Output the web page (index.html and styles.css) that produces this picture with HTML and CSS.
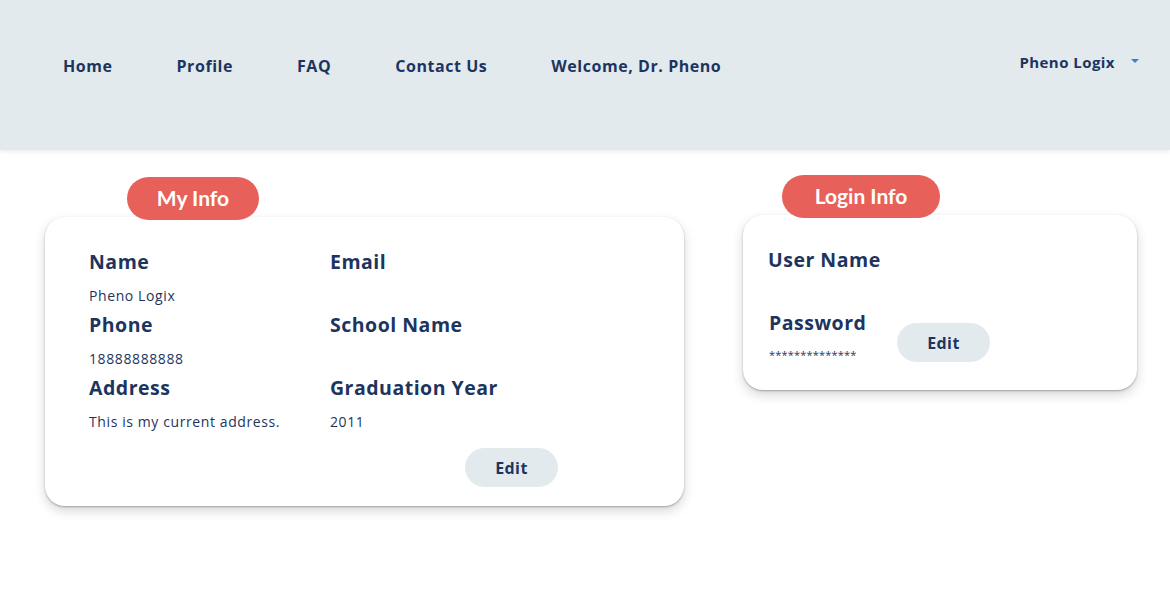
FILE: index.html
```html
<!DOCTYPE html>
<html>
<head>
<meta charset="utf-8">
<link rel="stylesheet" href="styles.css">
</head>
<body>
<header class="topbar">
  <nav class="nav">
    <a class="nav-link">Home</a>
    <a class="nav-link">Profile</a>
    <a class="nav-link">FAQ</a>
    <a class="nav-link">Contact Us</a>
    <a class="nav-link">Welcome, Dr. Pheno</a>
  </nav>
  <div class="account">
    <span class="account-name">Pheno Logix</span>
    <span class="caret"></span>
  </div>
</header>
<main class="content">
  <section class="panel panel-my">
    <div class="badge badge-my">My Info</div>
    <div class="card card-my">
      <div class="grid">
        <div class="field"><div class="label">Name</div><div class="value">Pheno Logix</div></div>
        <div class="field"><div class="label">Email</div><div class="value"></div></div>
        <div class="field"><div class="label">Phone</div><div class="value">18888888888</div></div>
        <div class="field"><div class="label">School Name</div><div class="value value-dot">-</div></div>
        <div class="field"><div class="label">Address</div><div class="value">This is my current address.</div></div>
        <div class="field"><div class="label">Graduation Year</div><div class="value">2011</div></div>
      </div>
      <div class="actions"><button class="edit">Edit</button></div>
    </div>
  </section>
  <section class="panel panel-login">
    <div class="badge badge-login">Login Info</div>
    <div class="card card-login">
      <div class="field field-user"><div class="label">User Name</div><div class="value"></div></div>
      <div class="login-row">
        <div class="field field-pw"><div class="label">Password</div><div class="value value-stars">**************</div></div>
        <button class="edit">Edit</button>
      </div>
    </div>
  </section>
</main>
</body>
</html>
```

FILE: styles.css
```css
* { box-sizing: border-box; }
html, body { margin: 0; padding: 0; background: #ffffff; }
body { font-family: "Open Sans", sans-serif; color: #1d355e; min-height: 600px; }

.topbar {
  height: 150px;
  background: #e3eaee;
  box-shadow: 0 2px 4px rgba(0,0,0,0.07);
  display: flex;
  justify-content: space-between;
  align-items: flex-start;
}
.nav {
  display: flex;
  gap: 64px;
  padding-left: 63px;
  padding-top: 56px;
}
.nav-link {
  font-family: "Open Sans", sans-serif;
  font-weight: 700;
  font-size: 16px;
  line-height: 20px;
  color: #1d355e;
  letter-spacing: 0.55px;
}
.account {
  display: flex;
  align-items: center;
  gap: 16px;
  padding-top: 52px;
  padding-right: 31px;
}
.account-name {
  font-weight: 700;
  font-size: 15px;
  line-height: 20px;
  letter-spacing: 0.45px;
  color: #1d355e;
}
.caret {
  width: 0; height: 0;
  border-left: 4px solid transparent;
  border-right: 4px solid transparent;
  border-top: 4px solid #3d7fc1;
  margin-top: -2px;
}

.content {
  display: flex;
  gap: 59px;
  padding-left: 45px;
  padding-top: 27px;
  padding-bottom: 60px;
}
.panel { display: flex; flex-direction: column; }
.panel-login { margin-top: -2px; }

.badge {
  position: relative;
  z-index: 2;
  align-self: flex-start;
  background: #e8605a;
  color: #fff;
  font-family: "Lato", sans-serif;
  font-weight: 700;
  font-size: 21px;
  line-height: 42px;
  height: 43px;
  border-radius: 22px;
  text-align: center;
  margin-bottom: -3px;
}
.badge-my { width: 132px; margin-left: 82px; }
.badge-login { width: 158px; margin-left: 39px; }

.card {
  background: #fff;
  border-radius: 20px;
  box-shadow: 0 1px 2px rgba(0,0,0,0.28), 0 5px 12px rgba(0,0,0,0.16);
  position: relative;
  z-index: 1;
}
.card-my {
  width: 639px;
  height: 289px;
  padding: 33px 44px 19px 44px;
}
.card-login {
  width: 394px;
  height: 175px;
  padding: 33px 20px 0 25px;
}

.grid {
  display: grid;
  grid-template-columns: 241px 1fr;
  row-gap: 7px;
}
.label {
  font-family: "Open Sans", sans-serif;
  font-weight: 700;
  font-size: 19.5px;
  line-height: 24px;
  color: #1d355e;
  margin-bottom: 12px;
  letter-spacing: 0.5px;
}
.value {
  font-family: "Open Sans", sans-serif;
  font-size: 14px;
  line-height: 20px;
  height: 20px;
  color: #1d355e;
  letter-spacing: 0.6px;
}
.value-dot { color: transparent; font-size: 6px; }
.value-stars { font-size: 11px; letter-spacing: 0.2px; margin-top: -2px; }

.actions {
  display: flex;
  padding-left: 376px;
  margin-top: 16px;
}
.edit {
  width: 93px;
  height: 39px;
  border: none;
  border-radius: 20px;
  background: #e3eaee;
  color: #1d355e;
  font-family: "Open Sans", sans-serif;
  font-weight: 700;
  font-size: 16px;
  letter-spacing: 0.4px;
  padding: 0;
}

.field-user { margin-bottom: 7px; }
.login-row {
  display: flex;
  align-items: flex-start;
}
.field-pw { width: 128px; margin-left: 1px; }
.login-row .edit { margin-top: 12px; }
```
